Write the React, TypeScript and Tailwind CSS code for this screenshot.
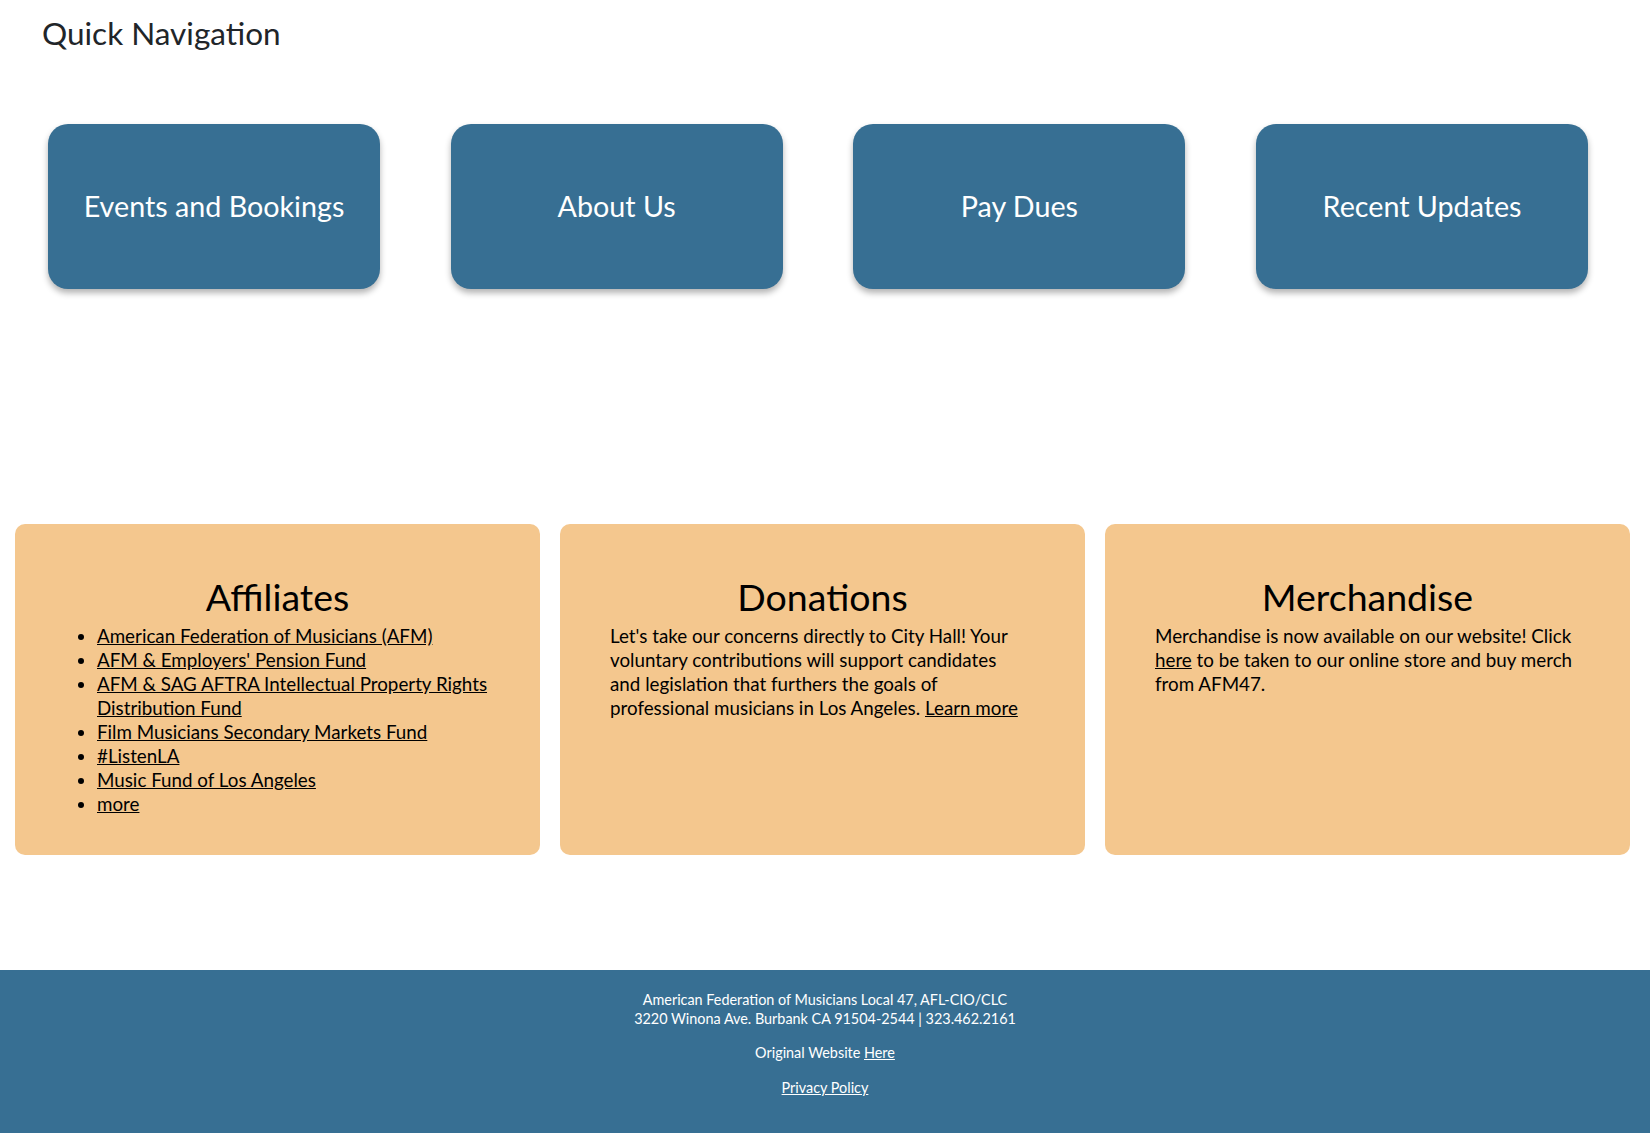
const NAV = ["Events and Bookings", "About Us", "Pay Dues", "Recent Updates"];

const AFFILIATES = [
  "American Federation of Musicians (AFM)",
  "AFM & Employers' Pension Fund",
  "AFM & SAG AFTRA Intellectual Property Rights Distribution Fund",
  "Film Musicians Secondary Markets Fund",
  "#ListenLA",
  "Music Fund of Los Angeles",
  "more",
];

function InfoCard({ title, children }: { title: string; children: React.ReactNode }) {
  return (
    <div className="flex-1 h-[331px] rounded-[10px] bg-[#f4c78e] px-[50px] pt-[50px] text-black">
      <h2 className="text-center text-[37.5px] leading-[1.2] mb-[5px]">{title}</h2>
      {children}
    </div>
  );
}

export default function App() {
  return (
    <div className="min-h-screen bg-white font-['Lato',sans-serif]">
      {/* Quick navigation */}
      <section className="pt-[14px]">
        <h1 className="pl-[42px] text-[31.5px] leading-[38px] text-[#212529]">Quick Navigation</h1>
        <div className="mt-[72px] flex gap-[70.7px] pl-[48px]">
          {NAV.map((n) => (
            <a
              key={n}
              href="#"
              className="flex h-[165px] w-[332px] items-center justify-center rounded-[20px] bg-[#376f93] text-[28.7px] text-white shadow-[0_4px_6px_rgba(0,0,0,0.3)]"
            >
              {n}
            </a>
          ))}
        </div>
      </section>

      {/* Info cards */}
      <section className="mt-[235px] flex gap-[20px] pl-[15px] pr-[20px]">
        <InfoCard title="Affiliates">
          <ul className="list-disc pl-[32px] -mr-[8px] text-[18.8px] leading-[24px]">
            {AFFILIATES.map((a) => (
              <li key={a}>
                <a href="#" className="underline">
                  {a}
                </a>
              </li>
            ))}
          </ul>
        </InfoCard>
        <InfoCard title="Donations">
          <p className="max-w-[418px] text-[18.8px] leading-[24px]">
            Let's take our concerns directly to City Hall! Your voluntary contributions will support
            candidates and legislation that furthers the goals of professional musicians in Los Angeles.{" "}
            <a href="#" className="underline">
              Learn more
            </a>
          </p>
        </InfoCard>
        <InfoCard title="Merchandise">
          <p className="text-[18.8px] leading-[24px]">
            Merchandise is now available on our website! Click{" "}
            <a href="#" className="underline">
              here
            </a>{" "}
            to be taken to our online store and buy merch from AFM47.
          </p>
        </InfoCard>
      </section>

      {/* Footer */}
      <footer className="mt-[115px] bg-[#376f93] pt-[20px] pb-[36px] text-center text-[14.4px] leading-[19px] text-white">
        <p>
          American Federation of Musicians Local 47, AFL-CIO/CLC
          <br />
          3220 Winona Ave. Burbank CA 91504-2544 | 323.462.2161
        </p>
        <p className="mt-[15px]">
          Original Website{" "}
          <a href="#" className="underline">
            Here
          </a>
        </p>
        <p className="mt-[16px]">
          <a href="#" className="underline">
            Privacy Policy
          </a>
        </p>
      </footer>
    </div>
  );
}
